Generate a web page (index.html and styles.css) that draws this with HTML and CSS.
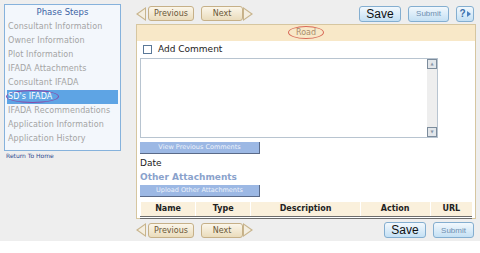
FILE: index.html
```html
<!DOCTYPE html>
<html lang="en">
<head>
    <meta charset="UTF-8">
    <title>SD's IFADA</title>
    <link rel="stylesheet" href="styles.css">
</head>
<body>
    <div class="page">
        <div class="sidebar">
            <div class="steps">
                <div class="steps-title">Phase Steps</div>
                <div class="step">Consultant Information</div>
                <div class="step">Owner Information</div>
                <div class="step">Plot Information</div>
                <div class="step">IFADA Attachments</div>
                <div class="step">Consultant IFADA</div>
                <div class="step active"><span class="mark">SD's IFADA</span></div>
                <div class="step">IFADA Recommendations</div>
                <div class="step">Application Information</div>
                <div class="step">Application History</div>
            </div>
            <a href="#" class="home-link">Return To Home</a>
        </div>

        <div class="main">
            <div class="toolbar">
                <div class="pager">
                    <span class="arrow left"></span>
                    <button class="nav-btn">Previous</button>
                    <button class="nav-btn next">Next</button>
                    <span class="arrow right"></span>
                </div>
                <div class="actions">
                    <button class="save-btn">Save</button>
                    <button class="submit-btn">Submit</button>
                    <button class="help-btn">?<span class="tri"></span></button>
                </div>
            </div>

            <div class="panel">
                <div class="panel-head"><span class="road">Road</span></div>
                <div class="panel-body">
                    <label class="check"><span class="box"></span>Add Comment</label>
                    <div class="comment-box">
                        <div class="scroll">
                            <span class="sbtn">&#9650;</span>
                            <span class="sbtn">&#9660;</span>
                        </div>
                    </div>
                    <button class="flat-btn">View Previous Comments</button>
                    <div class="date">Date</div>
                    <div class="sub-title">Other Attachments</div>
                    <button class="flat-btn">Upload Other Attachments</button>
                    <table class="files">
                        <thead>
                            <tr>
                                <th class="c-name">Name</th>
                                <th class="c-type">Type</th>
                                <th class="c-desc">Description</th>
                                <th class="c-act">Action</th>
                                <th class="c-url">URL</th>
                            </tr>
                        </thead>
                    </table>
                </div>
            </div>

            <div class="toolbar bottom">
                <div class="pager">
                    <span class="arrow left"></span>
                    <button class="nav-btn">Previous</button>
                    <button class="nav-btn next">Next</button>
                    <span class="arrow right"></span>
                </div>
                <div class="actions">
                    <button class="save-btn">Save</button>
                    <button class="submit-btn">Submit</button>
                </div>
            </div>
        </div>
    </div>
</body>
</html>
```

FILE: styles.css
```css
body {
    margin: 0;
    font-family: 'DejaVu Sans', Verdana, sans-serif;
    background: #ffffff;
}
.page {
    display: flex;
    background: #eeeeee;
    height: 241px;
    padding: 4px 4px 0 4px;
    box-sizing: border-box;
}
.sidebar {
    width: 117px;
    flex-shrink: 0;
}
.steps {
    border: 1px solid #86b2dc;
    background: #f3f7fc;
    padding: 0 2px 4px 2px;
}
.steps-title {
    text-align: center;
    font-size: 8.5px;
    color: #3c64a4;
    height: 15px;
    line-height: 15px;
}
.step {
    font-size: 8px;
    letter-spacing: 0.1px;
    color: #a4a4a4;
    height: 14px;
    line-height: 14px;
    padding-left: 1px;
    white-space: nowrap;
}
.step.active {
    background: #5ea4e4;
    color: #ffffff;
}
.mark {
    display: inline-block;
    border: 1px solid #8a4aa8;
    border-radius: 50%;
    padding: 0 6px 0 1px;
    line-height: 11px;
    margin-left: -2px;
}
.home-link {
    display: block;
    font-size: 6px;
    line-height: 8px;
    color: #2e4a8e;
    text-decoration: none;
    margin: 1px 0 0 2px;
}
.main {
    flex: 1;
    margin-left: 15px;
    display: flex;
    flex-direction: column;
}
.toolbar {
    display: flex;
    justify-content: space-between;
    align-items: center;
    height: 20px;
}
.toolbar.bottom {
    height: 22px;
    margin-top: 1px;
}
.pager {
    display: flex;
    align-items: center;
}
.arrow {
    width: 0;
    height: 0;
    border-top: 7px solid transparent;
    border-bottom: 7px solid transparent;
    position: relative;
}
.arrow.left {
    border-right: 10px solid #c8b48c;
}
.arrow.right {
    border-left: 10px solid #c8b48c;
}
.arrow.left::after,
.arrow.right::after {
    content: '';
    position: absolute;
    top: -5px;
    border-top: 5px solid transparent;
    border-bottom: 5px solid transparent;
}
.arrow.left::after {
    left: 2px;
    border-right: 7px solid #f4eee0;
}
.arrow.right::after {
    right: 2px;
    border-left: 7px solid #f4eee0;
}
.nav-btn {
    font-family: inherit;
    font-size: 8px;
    color: #6a5838;
    height: 15px;
    width: 46px;
    padding: 0;
    margin-left: 2px;
    border: 1px solid #c6b088;
    border-radius: 3px;
    background: linear-gradient(#fbf6ea, #eadcbc);
}
.nav-btn.next {
    margin-left: 7px;
    width: 42px;
}
.actions {
    display: flex;
    align-items: center;
    gap: 7px;
    margin-right: 2px;
}
.save-btn,
.submit-btn,
.help-btn {
    font-family: 'Liberation Sans', Arial, sans-serif;
    height: 16px;
    padding: 0;
    border: 1px solid #84aed0;
    border-radius: 3px;
    background: linear-gradient(#f2f8fd, #c4e0f4);
}
.save-btn {
    width: 42px;
    font-size: 12px;
    color: #101010;
}
.submit-btn {
    width: 41px;
    font-size: 8px;
    color: #6e8eb0;
}
.help-btn {
    width: 18px;
    font-size: 10px;
    font-weight: bold;
    color: #3a6ea8;
    display: flex;
    align-items: center;
    justify-content: center;
    gap: 1px;
}
.tri {
    width: 0;
    height: 0;
    border-top: 3px solid transparent;
    border-bottom: 3px solid transparent;
    border-left: 4px solid #4a80c0;
}
.panel {
    border: 1px solid #d6c6a0;
    background: #ffffff;
    height: 195px;
    box-sizing: border-box;
}
.panel-head {
    background: #f8e8c8;
    height: 16px;
    display: flex;
    justify-content: center;
    align-items: center;
}
.road {
    font-size: 8px;
    color: #a88c6c;
    border: 1px solid #d86a58;
    border-radius: 50%;
    padding: 0 7px;
    line-height: 11px;
}
.panel-body {
    padding: 0 3px;
}
.check {
    display: flex;
    align-items: center;
    font-size: 9px;
    color: #222222;
    height: 15px;
    margin-top: 1px;
    gap: 6px;
    padding-left: 3px;
}
.box {
    width: 7px;
    height: 7px;
    border: 1px solid #5a7898;
    background: #ffffff;
}
.comment-box {
    width: 296px;
    height: 78px;
    border: 1px solid #b8c4d0;
    margin-top: 1px;
    display: flex;
    justify-content: flex-end;
}
.scroll {
    width: 10px;
    background: #eeeeee;
    display: flex;
    flex-direction: column;
    justify-content: space-between;
}
.sbtn {
    height: 8px;
    border: 1px solid #7c8c9c;
    background: #e2e6ea;
    font-size: 4px;
    color: #8898a8;
    text-align: center;
    line-height: 8px;
}
.flat-btn {
    display: block;
    width: 120px;
    height: 12px;
    padding: 0;
    margin-top: 4px;
    font-family: inherit;
    font-size: 6.5px;
    color: #eef3fb;
    background: #9cb8e4;
    border: none;
    border-right: 1px solid #5a6a88;
    border-bottom: 1px solid #5a6a88;
}
.date {
    font-size: 9px;
    color: #222222;
    margin-top: 4px;
    height: 12px;
}
.sub-title {
    font-size: 9px;
    font-weight: bold;
    color: #8aa2cc;
    height: 10px;
    margin-top: 2px;
}
.sub-title + .flat-btn {
    margin-top: 3px;
}
.files {
    width: 100%;
    border-collapse: collapse;
    margin-top: 5px;
}
.files th {
    font-size: 8px;
    color: #222222;
    background: #faf0dc;
    height: 14px;
    padding: 0;
    border-bottom: 3px double #6c6c6c;
    border-left: 1px solid #ffffff;
}
.c-name { width: 55px; }
.c-type { width: 55px; }
.c-desc { width: 110px; }
.c-act { width: 70px; }
.c-url { width: 42px; }
```
